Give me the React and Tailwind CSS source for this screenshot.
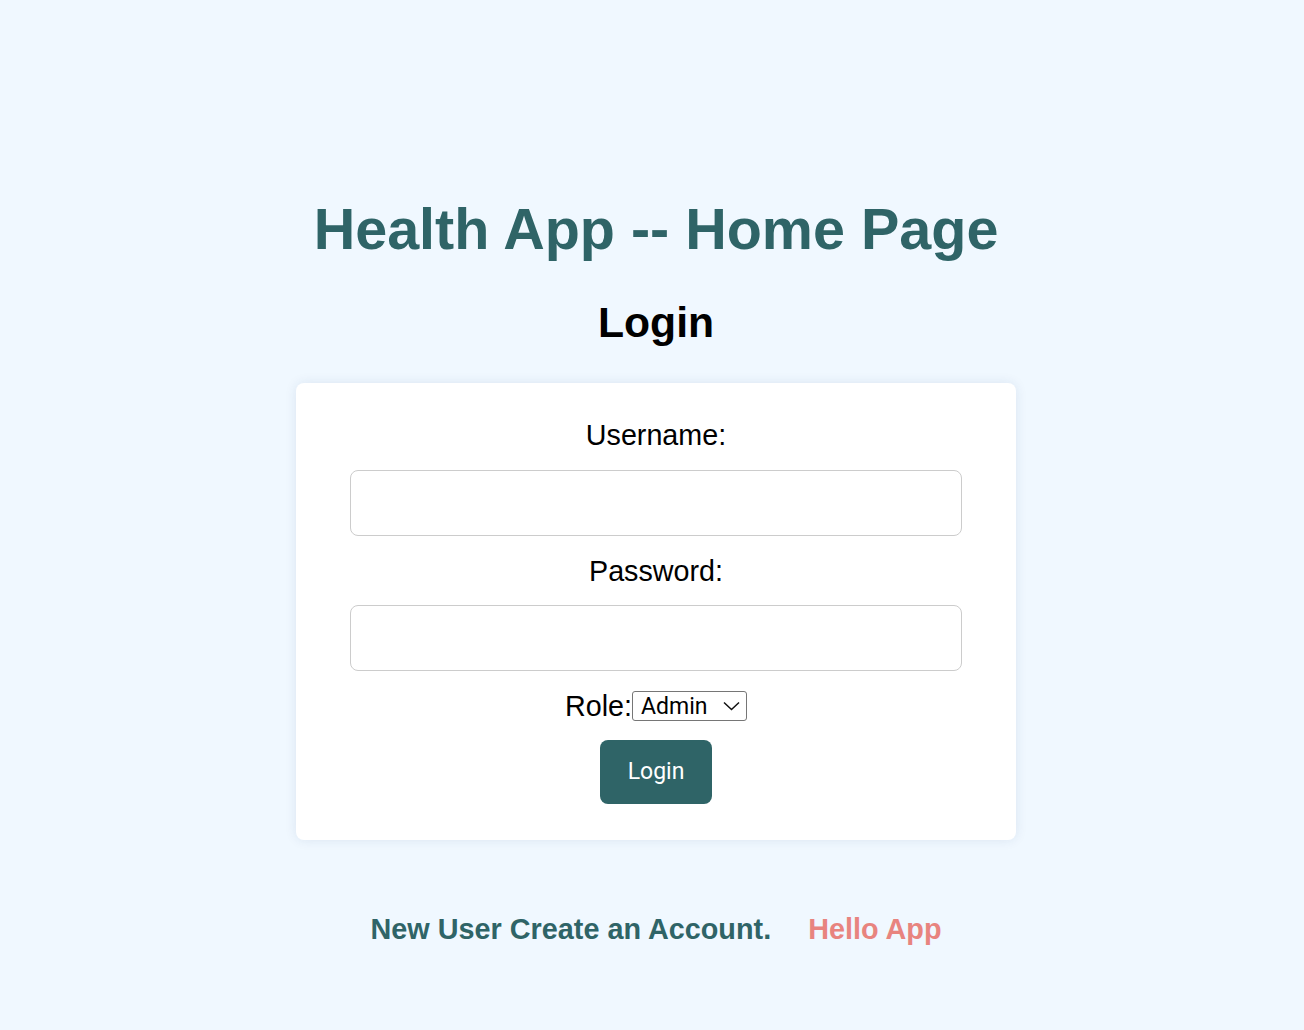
import React, { useState } from 'react';

export default function App() {
    const [username, setUsername] = useState('');
    const [password, setPassword] = useState('');
    const [role, setRole] = useState('admin');

    return (
        <div className="min-h-screen bg-[#f0f8ff] flex flex-col items-center pt-[197px] pl-2 font-['Liberation_Sans',Arial,sans-serif]">
            <h1 className="text-[57.5px] leading-[64px] font-bold text-[#2f6467]">Health App -- Home Page</h1>
            <h2 className="mt-[38px] text-[42.7px] leading-[47px] font-bold text-black">Login</h2>

            {/* tarjeta del formulario */}
            <form
                onSubmit={(e) => e.preventDefault()}
                className="mt-[37px] w-[720px] bg-white rounded-lg shadow-[0_0_12px_rgba(30,60,120,0.1)] px-[54px] pt-[36px] pb-[36px] flex flex-col items-center"
            >
                <label htmlFor="username" className="text-[28.7px] leading-[32px] text-black">Username:</label>
                <input
                    id="username"
                    type="text"
                    value={username}
                    onChange={(e) => setUsername(e.target.value)}
                    className="mt-[19px] w-full h-[66px] border border-[#cccccc] rounded-lg px-3 text-xl outline-none bg-white"
                />

                <label htmlFor="password" className="mt-[19px] text-[28.7px] leading-[32px] text-black">Password:</label>
                <input
                    id="password"
                    type="password"
                    value={password}
                    onChange={(e) => setPassword(e.target.value)}
                    className="mt-[18px] w-full h-[66px] border border-[#cccccc] rounded-lg px-3 text-xl outline-none bg-white"
                />

                <div className="mt-[19px] flex items-center">
                    <label htmlFor="role" className="text-[28.7px] leading-[32px] text-black">Role:</label>
                    <div className="relative">
                        <select
                            id="role"
                            value={role}
                            onChange={(e) => setRole(e.target.value)}
                            className="appearance-none w-[115px] h-[30px] border border-[#767676] rounded-[3px] bg-white text-[23px] leading-none pl-[8px] text-black font-['Roboto',sans-serif]"
                        >
                            <option value="admin">Admin</option>
                            <option value="doctor">Doctor</option>
                            <option value="patient">Patient</option>
                        </select>
                        {/* flecha del select */}
                        <svg className="absolute right-[7px] top-[10px] pointer-events-none" width="17" height="10" viewBox="0 0 17 10" fill="none">
                            <path d="M1 1.5 L8.5 8.5 L16 1.5" stroke="#111" strokeWidth="1.5" />
                        </svg>
                    </div>
                </div>

                <button
                    type="submit"
                    className="mt-[18px] w-[112px] h-[64px] rounded-lg bg-[#2f6467] text-white text-[23px] font-['Roboto',sans-serif]"
                >
                    Login
                </button>
            </form>

            <div className="mt-[73px] flex items-center gap-[37px] text-[28.8px] leading-[32px] font-bold">
                <a href="#" className="text-[#2f6467]">New User Create an Account.</a>
                <a href="#" className="text-[#e8847f]">Hello App</a>
            </div>
        </div>
    );
}
